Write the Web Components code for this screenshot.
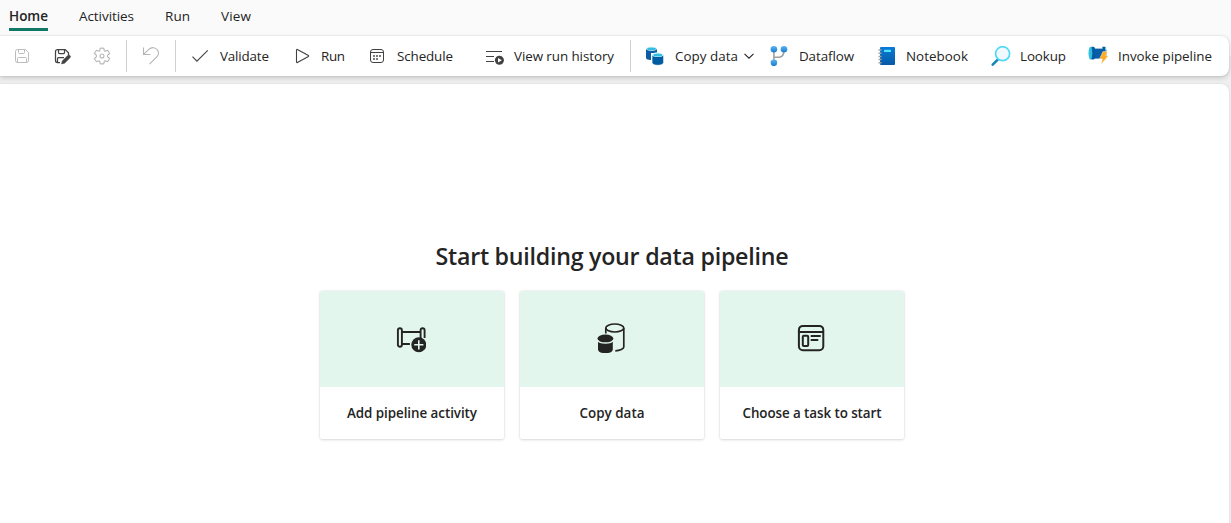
<!DOCTYPE html>
<html lang="en">
<head>
<meta charset="utf-8">
<title>Data pipeline</title>
<style>
html,body{margin:0;height:100%;overflow:hidden}
body{font-family:"Open Sans","Noto Sans",sans-serif;color:#242424}
</style>
</head>
<body>
<pipeline-app></pipeline-app>
<script>
const ICONS = {
save:'<g fill="none" stroke="#bdbdbd"><path d="M3.5 5.5a2 2 0 0 1 2-2h8l3 3v8a2 2 0 0 1-2 2h-9a2 2 0 0 1-2-2z"/><path d="M6.5 3.5v3a1 1 0 0 0 1 1h4a1 1 0 0 0 1-1v-3M5.5 16.5v-4a1 1 0 0 1 1-1h7a1 1 0 0 1 1 1v4"/></g>',
saveEdit:'<g fill="none" stroke="#424242" stroke-width="1.25"><path d="M8 16.5H5.5a2 2 0 0 1-2-2v-9a2 2 0 0 1 2-2h7.7l3.3 3.3V9"/><path d="M6.5 3.5v3a1 1 0 0 0 1 1h4a1 1 0 0 0 1-1v-3M5.5 16.5v-4a1 1 0 0 1 1-1H12"/></g><path d="m9.5 17.9.8-3 5.4-5.4a1.6 1.6 0 0 1 2.3 2.3l-5.4 5.4z" fill="#424242" stroke="#424242" stroke-width=".5"/>',
gear:'<g fill="none" stroke="#b5b5b5" stroke-width="1.1"><path d="M8.2 2.3Q10 1.9 11.8 2.3L12.2 4.4Q12.4 5.4 13.5 5.1L15.5 4.3Q17 5.8 17.6 7.6L15.8 9Q15.1 10 15.8 11L17.6 12.4Q17 14.2 15.5 15.7L13.5 14.9Q12.4 14.6 12.2 15.6L11.8 17.7Q10 18.1 8.2 17.7L7.8 15.6Q7.6 14.6 6.5 14.9L4.5 15.7Q3 14.2 2.4 12.4L4.2 11Q4.9 10 4.2 9L2.4 7.6Q3 5.8 4.5 4.3L6.5 5.1Q7.6 5.4 7.8 4.4Z"/><circle cx="10" cy="10" r="2"/></g>',
undo:'<path d="M2.5 1.5v7h7M2.8 8.2l5-4.8c3-2.8 6.8-1.9 8.4.3 1.8 2.3 1.6 5.2-.4 7.2l-7.3 7.3" fill="none" stroke="#b5b5b5" stroke-width="1.1"/>',
check:'<path d="m2.5 10.7 4.4 4.4L17.8 4.3" fill="none" stroke="#424242" stroke-width="1.1"/>',
play:'<path d="M4.5 4v12a.6.6 0 0 0 .9.5l11-6a.6.6 0 0 0 0-1l-11-6a.6.6 0 0 0-.9.5z" fill="none" stroke="#424242" stroke-width="1.1"/>',
calendar:'<g fill="none" stroke="#424242"><rect x="3.5" y="3.5" width="13" height="13" rx="2.5"/><path d="M3.5 6.5h13"/></g><g fill="#424242"><circle cx="7" cy="10" r=".9"/><circle cx="10" cy="10" r=".9"/><circle cx="13" cy="10" r=".9"/><circle cx="7" cy="13" r=".9"/><circle cx="10" cy="13" r=".9"/></g>',
history:'<path d="M1 5.5h16M1 10.5h8M1 15.5h8" stroke="#424242" stroke-width="1.1"/><circle cx="14.4" cy="14.2" r="4.5" fill="#424242"/><path d="m13 11.9 3.8 2.3-3.8 2.3z" fill="#fff"/>',
database:'<path d="M1 2.8v9c0 1.4 2 2.2 5 2.2V7h6V2.8z" fill="#0c5ba3"/><ellipse cx="6.5" cy="2.8" rx="5.5" ry="2.2" fill="#e3f4fb"/><ellipse cx="6.5" cy="3" rx="4.5" ry="1.4" fill="#32bee0"/><path d="M7.1 8.9v7.6c0 1.5 2.4 2.7 5.7 2.7s5.7-1.2 5.7-2.7V8.9z" fill="#005ba1" stroke="#fff" stroke-width=".5"/><ellipse cx="12.8" cy="8.7" rx="5.7" ry="2.4" fill="#e3f4fb"/><ellipse cx="12.8" cy="8.9" rx="4.5" ry="1.5" fill="#32bee0"/>',
flow:'<defs><linearGradient id="b" x2="0" y2="1"><stop stop-color="#5ab4f4"/><stop offset="1" stop-color="#187bd1"/></linearGradient></defs><path d="M4.9 5v12M4.9 11.2H10q4.8 0 4.8-6.2" fill="none" stroke="#a0a0a0" stroke-width="1.6"/><g fill="url(#b)"><circle cx="4.9" cy="3.3" r="3.3"/><circle cx="15" cy="3.3" r="3.3"/><circle cx="4.9" cy="16.8" r="3.3"/></g>',
notebook:'<defs><linearGradient id="n" x2="0" y2="1"><stop stop-color="#087bd6"/><stop offset="1" stop-color="#075aa5"/></linearGradient></defs><rect x="3" y="1" width="15" height="18" rx="1" fill="url(#n)"/><path d="M1.5 4h3M1.5 7.2h3M1.5 10.4h3M1.5 13.6h3M1.5 16.8h3" stroke="#a5a5a5" stroke-width="1.5"/><rect x="7" y="3.8" width="7" height="2.2" rx=".5" fill="#50e6ff"/>',
lookup:'<path d="m1.7 18.7 5.8-5.9" stroke="#1685b8" stroke-width="2.5" stroke-linecap="round"/><circle cx="11.6" cy="7.7" r="7" fill="#f0fafe" stroke="#50d9f4" stroke-width="1.7"/>',
invoke:'<path d="M3 2.6h13v10H3z" fill="#075da8"/><path d="M2.6 .8c2.7 0 2.7 12.7 0 12.7S-.1 .8 2.6 .8z" fill="#32bee0"/><path d="M3.3 .8h2.1q1.3 0 1.6 2v8.7q-.3 2-1.6 2H3.3q2.4-6.3 0-12.7z" fill="#005ba1"/><path d="M14.2 .8h2.6c2.3 0 2.3 12.7 0 12.7h-2.6q2-6.3 0-12.7z" fill="#005ba1"/><path d="M17.3 1.8q2 5.4 0 10.7" fill="none" stroke="#73cae9"/><path d="M14.9 5.6h4.6l-2 4.1h2.9L13 18.5l1.6-5.7h-3z" fill="#ffab22" stroke="#fff" stroke-width=".4"/>',
chevron:'<path d="m1.5 3.8 4.5 4.4 4.5-4.4" fill="none" stroke="#242424" stroke-width="1.1"/>',
pipe:'<g fill="none" stroke="#242424" stroke-width="1.9"><rect x="1.9" y="5.3" width="4" height="18.4" rx="2"/><path d="M5.9 9h18M5.9 21h8M24.6 15V7.3a2 2 0 0 1 4 0V15"/></g><circle cx="22.8" cy="21.8" r="7.5" fill="#242424"/><path d="M22.8 17.2v9.2M18.2 21.8h9.2" stroke="#e3f6ee" stroke-width="1.6"/>',
copy:'<g fill="none" stroke="#242424" stroke-width="1.7"><ellipse cx="18.8" cy="5" rx="9" ry="4"/><path d="M9.8 5v5.5M27.8 5v19c0 1.8-3.8 3.5-8.5 3.8"/></g><path d="M2 15v11.4c0 5 14.8 5 14.8 0V15z" fill="#242424"/><ellipse cx="9.4" cy="15.5" rx="7.9" ry="4" fill="#242424"/><path d="M1.8 17.2c1.6 3.8 13.6 3.8 15.2 0" fill="none" stroke="#e3f6ee" stroke-width="1.4"/>',
task:'<g fill="none" stroke="#242424" stroke-width="2"><rect x="2.9" y="2.9" width="24.4" height="24.4" rx="4"/><path d="M3 8.9h24"/><rect x="6.8" y="12.7" width="5.4" height="10.4" rx="1"/><path d="M15.5 13h8.5M15.5 17h6" stroke-linecap="round"/></g>'
};
function svg(name, size, w = size) {
  return `<svg width="${w}" height="${size}" viewBox="0 0 ${({pipe:30,copy:30,task:30,chevron:12})[name] || (name==='invoke'?22:20)} ${({pipe:30,copy:30,task:30,chevron:12})[name] || 20}" aria-hidden="true">${ICONS[name]}</svg>`;
}
class Base extends HTMLElement {
  connectedCallback() {
    if (!this.shadowRoot) this.attachShadow({mode:'open'}).innerHTML = this.view();
    this.ready?.();
  }
}
/* A single-line label whose tracking fills the width given in "w". */
customElements.define('fit-label', class extends Base {
  view() { return `<style>:host{display:block;flex:none;white-space:nowrap;width:${this.getAttribute('w')}px}span{display:inline-block}</style><span><slot></slot></span>`; }
  ready() {
    const s = this.shadowRoot.querySelector('span');
    const n = this.textContent.length;
    const d = (+this.getAttribute('w') - s.getBoundingClientRect().width) / (n - 1);
    s.style.letterSpacing = d.toFixed(3) + 'px';
  }
});
customElements.define('menu-tab', class extends Base {
  view() { return `<style>:host{display:block;height:32px;line-height:33px;font-size:13.5px;position:relative;color:#242424}:host([active]){font-weight:600}:host([active])::after{content:"";position:absolute;left:0;right:0;bottom:1px;height:3px;background:#117865}</style><slot></slot>`; }
});
customElements.define('tool-button', class extends Base {
  view() {
    const m = this.getAttribute('m'), g = this.getAttribute('g') || 0, n = this.getAttribute('icon');
    return `<style>:host{display:flex;flex:none;align-items:center;height:40px;margin-left:${m}px;font-size:13.4px;line-height:20px;color:#242424}svg{display:block;flex:none}.t{margin-left:${g}px}.c{margin-left:5px}</style>${svg(n,20,n==='invoke'?22:20)}<div class="t"><slot></slot></div>${this.hasAttribute('menu')?`<div class="c">${svg('chevron',12)}</div>`:''}`;
  }
});
customElements.define('tool-divider', class extends Base {
  view() { return `<style>:host{display:block;flex:none;width:1px;height:32px;background:#d1d1d1;margin-left:${this.getAttribute('m')}px}</style>`; }
});
customElements.define('task-card', class extends Base {
  view() {
    return `<style>:host{display:flex;flex-direction:column;width:184px;height:148px;border-radius:2px;overflow:hidden;background:#fff;box-shadow:0 0 2px rgba(0,0,0,.12),0 1px 3px rgba(0,0,0,.12)}.i{height:96px;box-sizing:border-box;padding:0 2px 2px 0;background:#e3f6ee;display:flex;align-items:center;justify-content:center}.l{height:52px;display:flex;align-items:center;justify-content:center;font-size:13.4px;font-weight:600}</style><div class="i">${svg(this.getAttribute('icon'),30)}</div><div class="l"><slot></slot></div>`;
  }
});
customElements.define('pipeline-app', class extends Base {
  view() { return `<style>
:host{display:flex;flex-direction:column;height:523px;width:1231px;background:#fafafa}
nav{display:flex;height:36px;padding-left:9px;flex:none}
.work{flex:1;background:#efefef;display:flex;flex-direction:column;gap:8px}
.bar{display:flex;align-items:center;width:1229px;height:40px;background:#fff;border-radius:0 8px 8px 0;box-shadow:0 0 2px rgba(0,0,0,.14),0 2px 5px rgba(0,0,0,.16)}
.top{background:linear-gradient(#fafafa 50%,#efefef 50%)}
main{flex:1;width:1229px;box-sizing:border-box;background:#fff;border-radius:0 8px 0 0;box-shadow:0 0 2px rgba(0,0,0,.14);display:flex;flex-direction:column;align-items:center;padding-top:156px;padding-right:5px}
.title{font-size:23.2px;font-weight:600;line-height:32px;margin-bottom:19px;color:#242424}
.cards{display:flex;gap:16px}
</style>
<nav><menu-tab active><fit-label w="39">Home</fit-label></menu-tab><menu-tab style="margin-left:31px"><fit-label w="55">Activities</fit-label></menu-tab><menu-tab style="margin-left:31px"><fit-label w="25">Run</fit-label></menu-tab><menu-tab style="margin-left:31px"><fit-label w="30">View</fit-label></menu-tab></nav>
<div class="work"><div class="top"><div class="bar">
<tool-button icon="save" m="12"></tool-button><tool-button icon="saveEdit" m="20"></tool-button><tool-button icon="gear" m="20"></tool-button>
<tool-divider m="14"></tool-divider><tool-button icon="undo" m="14"></tool-button><tool-divider m="14"></tool-divider>
<tool-button icon="check" m="14" g="10"><fit-label w="49">Validate</fit-label></tool-button>
<tool-button icon="play" m="23" g="9"><fit-label w="24">Run</fit-label></tool-button>
<tool-button icon="calendar" m="22" g="10"><fit-label w="56">Schedule</fit-label></tool-button>
<tool-button icon="history" m="32" g="9"><fit-label w="100">View run history</fit-label></tool-button>
<tool-divider m="16"></tool-divider>
<tool-button icon="database" m="14" g="10" menu><fit-label w="63">Copy data</fit-label></tool-button>
<tool-button icon="flow" m="14" g="10"><fit-label w="55">Dataflow</fit-label></tool-button>
<tool-button icon="notebook" m="23" g="9"><fit-label w="62">Notebook</fit-label></tool-button>
<tool-button icon="lookup" m="23" g="9"><fit-label w="46">Lookup</fit-label></tool-button>
<tool-button icon="invoke" m="22" g="8"><fit-label w="94">Invoke pipeline</fit-label></tool-button>
</div></div>
<main><div class="title"><fit-label w="353">Start building your data pipeline</fit-label></div>
<div class="cards"><task-card icon="pipe"><fit-label w="130">Add pipeline activity</fit-label></task-card><task-card icon="copy"><fit-label w="65">Copy data</fit-label></task-card><task-card icon="task"><fit-label w="139">Choose a task to start</fit-label></task-card></div></main></div>`; }
});
</script>
</body>
</html>
